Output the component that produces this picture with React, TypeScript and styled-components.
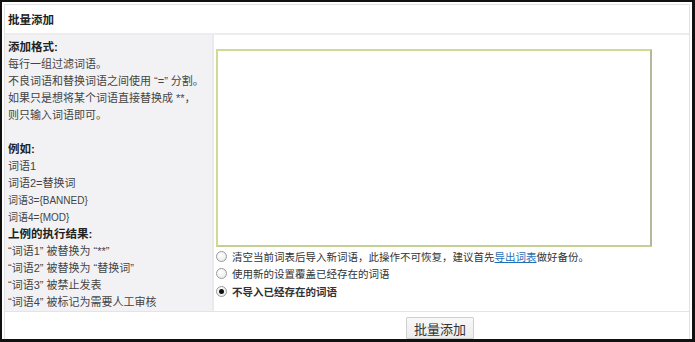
import styled, { createGlobalStyle } from 'styled-components';

const GlobalStyle = createGlobalStyle`
  html, body {
    margin: 0;
    padding: 0;
    background: #ffffff;
  }
  body {
    font-family: "Liberation Sans", "Noto Sans CJK SC", sans-serif;
    font-size: 11px;
    color: #333;
  }
`;

const Frame = styled.div`
  width: 695px;
  height: 342px;
  box-sizing: border-box;
  border-style: solid;
  border-color: #111;
  border-width: 2px 3px 3px 2px;
  padding: 2px 2px 0 2px;
  background: #fff;
  overflow: hidden;
`;

const Panel = styled.div`
  border: 1px solid #e2e2e2;
  border-bottom: none;
  height: 100%;
  box-sizing: border-box;
  display: flex;
  flex-direction: column;
`;

const Header = styled.div`
  height: 28px;
  display: flex;
  align-items: center;
  padding-left: 3px;
  font-size: 11.5px;
  font-weight: bold;
  color: #222;
  border-bottom: 2px solid #ececec;
`;

const Row = styled.div`
  display: grid;
  grid-template-columns: 209px 1fr;
  height: 279px;
  border-bottom: 1px solid #e4e4e4;
`;

const Help = styled.div`
  background: #f2f2f4;
  border-right: 2px solid #e9e9ee;
  padding: 4px 0 0 3px;
  line-height: 17px;
  color: #444;
`;

const HelpTitle = styled.div<{ $gap?: boolean }>`
  font-size: 11.5px;
  font-weight: bold;
  color: #222;
  margin-top: ${p => (p.$gap ? '17px' : '0')};
`;

const HelpLine = styled.div<{ $small?: boolean }>`
  font-size: ${p => (p.$small ? '10px' : '11px')};
  white-space: nowrap;
`;

const Editor = styled.div`
  padding: 14px 0 0 2px;
`;

const WordArea = styled.textarea`
  display: block;
  width: 436px;
  height: 198px;
  box-sizing: border-box;
  border: 2px solid #cddb95;
  border-right-color: #b2b99a;
  border-bottom-color: #c4cf93;
  background: #fff;
  resize: none;
  outline: none;
`;

const Options = styled.div`
  padding-top: 1px;
`;

const Option = styled.label<{ $bold?: boolean }>`
  display: flex;
  align-items: center;
  gap: 5px;
  height: 17.5px;
  font-size: 10.5px;
  font-weight: ${p => (p.$bold ? 'bold' : 'normal')};
  color: #333;
  white-space: nowrap;
`;

const Radio = styled.span<{ $checked?: boolean }>`
  width: 11px;
  height: 11px;
  box-sizing: border-box;
  border-radius: 50%;
  border: 1px solid #9a9a9a;
  background: radial-gradient(circle at 40% 35%, #fff 0%, #e6e6e6 100%);
  display: flex;
  align-items: center;
  justify-content: center;
  flex-shrink: 0;

  &::after {
    content: '';
    width: 5px;
    height: 5px;
    border-radius: 50%;
    background: ${p => (p.$checked ? '#111' : 'transparent')};
  }
`;

const Link = styled.a`
  color: #1f6fb6;
  text-decoration: underline;
`;

const Footer = styled.div`
  display: grid;
  grid-template-columns: 209px 1fr;
  padding-top: 5px;
`;

const Actions = styled.div`
  padding-left: 192px;
`;

const SubmitButton = styled.button`
  width: 68px;
  height: 22px;
  font-family: "Liberation Sans", "Noto Sans CJK SC", sans-serif;
  font-size: 13px;
  color: #333;
  background: linear-gradient(#f8f8f8, #ececec);
  border: 1px solid #cfcfcf;
  border-radius: 1px;
  padding: 0;
`;

export default function App() {
  return (
    <>
      <GlobalStyle />
      <Frame>
        <Panel>
          <Header>批量添加</Header>
          <Row>
            <Help>
              <HelpTitle>添加格式:</HelpTitle>
              <HelpLine>每行一组过滤词语。</HelpLine>
              <HelpLine>不良词语和替换词语之间使用 “=” 分割。</HelpLine>
              <HelpLine>如果只是想将某个词语直接替换成 **，</HelpLine>
              <HelpLine>则只输入词语即可。</HelpLine>
              <HelpTitle $gap>例如:</HelpTitle>
              <HelpLine>词语1</HelpLine>
              <HelpLine>词语2=替换词</HelpLine>
              <HelpLine $small>词语3={'{BANNED}'}</HelpLine>
              <HelpLine $small>词语4={'{MOD}'}</HelpLine>
              <HelpTitle>上例的执行结果:</HelpTitle>
              <HelpLine>“词语1” 被替换为 “**”</HelpLine>
              <HelpLine>“词语2” 被替换为 “替换词”</HelpLine>
              <HelpLine>“词语3” 被禁止发表</HelpLine>
              <HelpLine>“词语4” 被标记为需要人工审核</HelpLine>
            </Help>
            <Editor>
              <WordArea />
              <Options>
                <Option>
                  <Radio />
                  <span>
                    清空当前词表后导入新词语，此操作不可恢复，建议首先<Link>导出词表</Link>做好备份。
                  </span>
                </Option>
                <Option>
                  <Radio />
                  <span>使用新的设置覆盖已经存在的词语</span>
                </Option>
                <Option $bold>
                  <Radio $checked />
                  <span>不导入已经存在的词语</span>
                </Option>
              </Options>
            </Editor>
          </Row>
          <Footer>
            <div />
            <Actions>
              <SubmitButton>批量添加</SubmitButton>
            </Actions>
          </Footer>
        </Panel>
      </Frame>
    </>
  );
}
